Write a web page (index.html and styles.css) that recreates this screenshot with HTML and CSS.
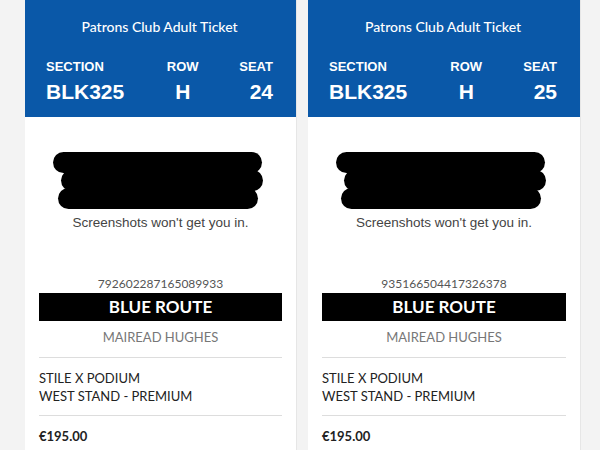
FILE: index.html
```html
<!DOCTYPE html>
<html lang="en">
<head>
  <meta charset="UTF-8">
  <title>Tickets</title>
  <meta name="viewport" content="width=device-width, initial-scale=1.0">
  <link rel="stylesheet" href="styles.css">
</head>
<body>
  <div class="wallet">
    <div class="ticket">
      <div class="head">
        <div class="title">Patrons Club Adult Ticket</div>
        <div class="seat-row">
          <div class="col left"><span class="lbl">SECTION</span><span class="val">BLK325</span></div>
          <div class="col mid"><span class="lbl">ROW</span><span class="val">H</span></div>
          <div class="col right"><span class="lbl">SEAT</span><span class="val">24</span></div>
        </div>
      </div>
      <div class="body">
        <div class="code">
          <svg width="210" height="58" viewBox="0 0 210 58">
            <rect x="0" y="0" width="209" height="21" rx="10.5" fill="#000"/>
            <rect x="8" y="18" width="202" height="21" rx="10.5" fill="#000"/>
            <rect x="5" y="36" width="200" height="21" rx="10.5" fill="#000"/>
          </svg>
          <p class="warn">Screenshots won't get you in.</p>
        </div>
        <div class="barcode-num">792602287165089933</div>
        <div class="route">BLUE ROUTE</div>
        <div class="holder">MAIREAD HUGHES</div>
        <div class="info">
          <div>STILE X PODIUM</div>
          <div>WEST STAND - PREMIUM</div>
        </div>
        <div class="price">€195.00</div>
      </div>
    </div>

    <div class="ticket">
      <div class="head">
        <div class="title">Patrons Club Adult Ticket</div>
        <div class="seat-row">
          <div class="col left"><span class="lbl">SECTION</span><span class="val">BLK325</span></div>
          <div class="col mid"><span class="lbl">ROW</span><span class="val">H</span></div>
          <div class="col right"><span class="lbl">SEAT</span><span class="val">25</span></div>
        </div>
      </div>
      <div class="body">
        <div class="code">
          <svg width="210" height="58" viewBox="0 0 210 58">
            <rect x="0" y="0" width="209" height="21" rx="10.5" fill="#000"/>
            <rect x="8" y="18" width="202" height="21" rx="10.5" fill="#000"/>
            <rect x="5" y="36" width="200" height="21" rx="10.5" fill="#000"/>
          </svg>
          <p class="warn">Screenshots won't get you in.</p>
        </div>
        <div class="barcode-num">935166504417326378</div>
        <div class="route">BLUE ROUTE</div>
        <div class="holder">MAIREAD HUGHES</div>
        <div class="info">
          <div>STILE X PODIUM</div>
          <div>WEST STAND - PREMIUM</div>
        </div>
        <div class="price">€195.00</div>
      </div>
    </div>
  </div>
</body>
</html>
```

FILE: styles.css
```css
body {
  margin: 0;
  padding: 0;
  background: #f3f3f3;
  font-family: "Lato", "Liberation Sans", sans-serif;
  height: 450px;
  overflow: hidden;
}
.wallet {
  display: flex;
  gap: 11px;
  padding-left: 25px;
}
.ticket {
  width: 271px;
  height: 450px;
  background: #fff;
  border-right: 1px solid #e6e6e6;
}
.ticket + .ticket {
  width: 272px;
}
.head {
  background: #0a58a8;
  color: #fff;
  height: 117px;
  box-sizing: border-box;
  padding: 18px 23px 0 21px;
}
.title {
  text-align: center;
  font-size: 14px;
  line-height: 18px;
  font-weight: 500;
}
.seat-row {
  display: flex;
  justify-content: space-between;
  margin-top: 23px;
  font-family: "Liberation Sans", sans-serif;
  font-weight: bold;
}
.col {
  display: flex;
  flex-direction: column;
}
.col.mid {
  align-items: center;
  margin-left: 2px;
}
.col.right {
  align-items: flex-end;
}
.lbl {
  font-size: 13px;
  line-height: 16px;
}
.val {
  font-size: 21px;
  line-height: 26px;
  margin-top: 4px;
}
.body {
  padding: 0 14px;
}
.code {
  text-align: center;
  padding-top: 35px;
}
.code svg {
  display: block;
  margin-left: 14px;
}
.warn {
  margin: 5px 0 0;
  font-family: "Liberation Sans", sans-serif;
  font-size: 13.5px;
  line-height: 16px;
  color: #444;
}
.barcode-num {
  margin-top: 46px;
  text-align: center;
  font-size: 12px;
  line-height: 14px;
  color: #555;
}
.route {
  background: #000;
  color: #fff;
  text-align: center;
  font-size: 17px;
  font-weight: bold;
  height: 28px;
  line-height: 28px;
  margin-top: 2px;
}
.holder {
  text-align: center;
  color: #777;
  font-size: 13px;
  line-height: 16px;
  padding: 8px 0 12px;
  border-bottom: 1px solid #ddd;
}
.info {
  font-size: 13px;
  line-height: 18px;
  color: #222;
  padding: 11px 0 10px;
  border-bottom: 1px solid #ddd;
}
.price {
  font-size: 13px;
  font-weight: bold;
  color: #222;
  padding-top: 12px;
}
```
